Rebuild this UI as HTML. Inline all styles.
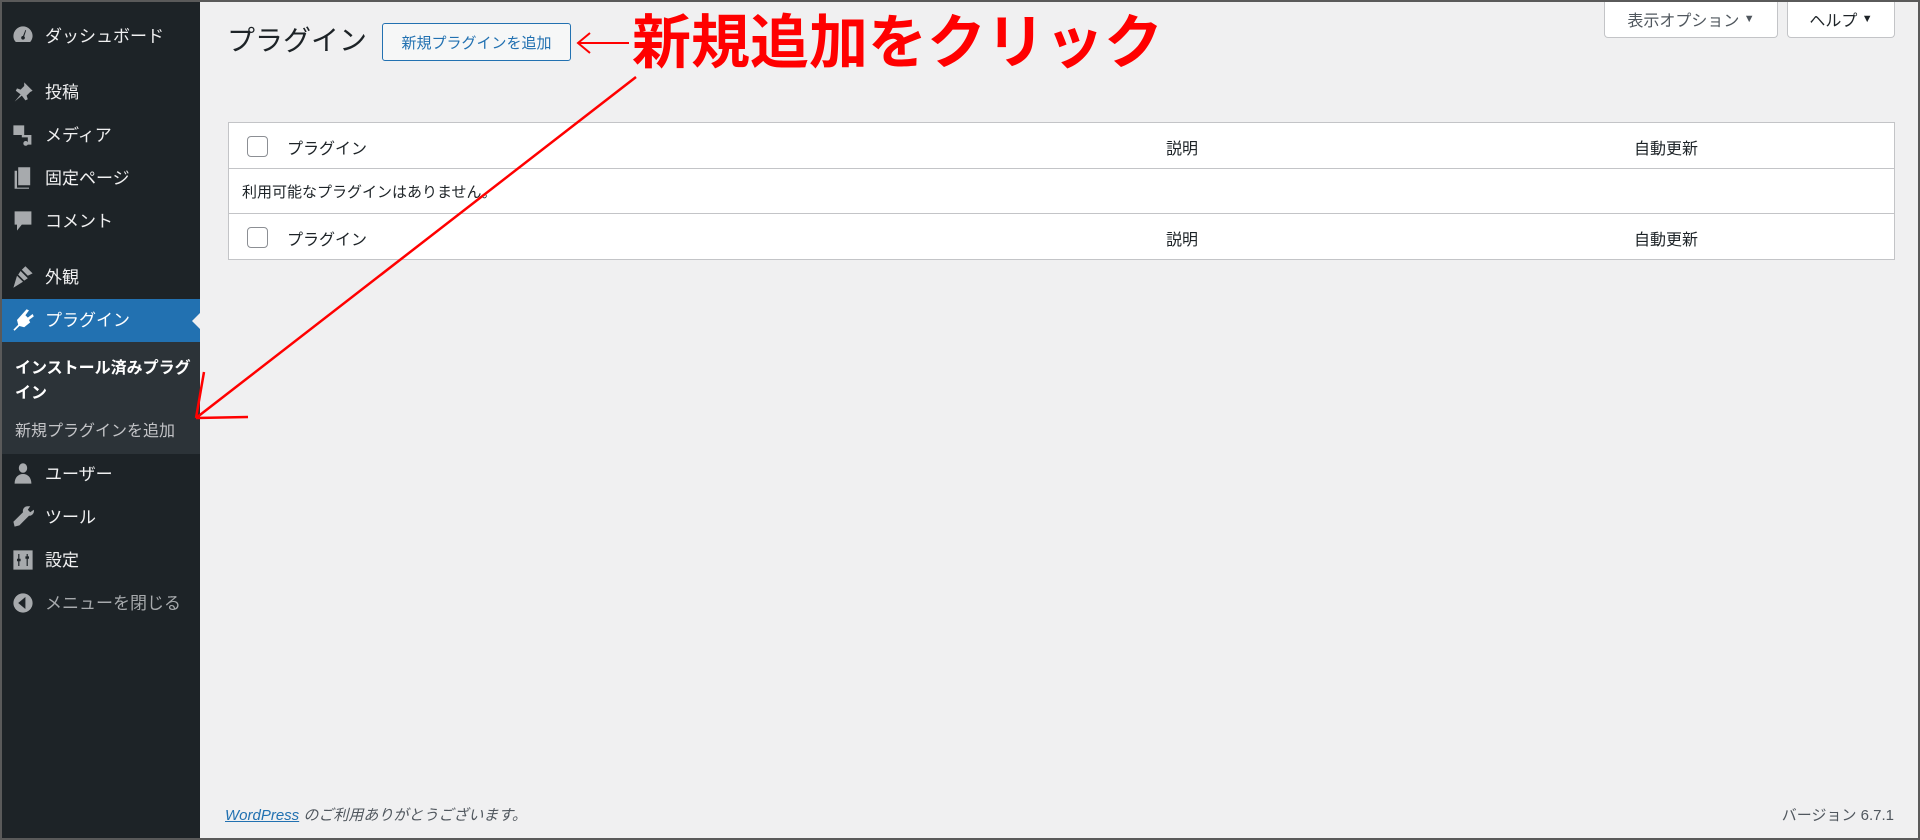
<!DOCTYPE html>
<html><head><meta charset="utf-8"><style>
*{box-sizing:border-box;margin:0;padding:0}
body{width:1920px;height:840px;overflow:hidden;background:#f0f0f1;font-family:"Liberation Sans","Noto Sans CJK JP",sans-serif;color:#1d2327;position:relative}
.frame{position:absolute;left:0;top:0;width:1920px;height:840px;border:2px solid #5a5a5a;pointer-events:none;z-index:10}
#side{position:absolute;left:0;top:0;width:200px;height:840px;background:#1d2327}
.mi{position:absolute;left:0;width:200px;color:#f0f0f1;font-size:17px;line-height:20px}
.mi .t{position:absolute;left:45px}
.mi svg{position:absolute;left:11px;top:-3px}
.act{position:absolute;left:0;top:299px;width:200px;height:43px;background:#2271b1}
.sub{position:absolute;left:0;top:342px;width:200px;height:112px;background:#2c3338}
.abs{position:absolute}
.btn{position:absolute;border:1px solid #2271b1;border-radius:3px;background:#f6f7f7;color:#2271b1;font-size:15px;display:flex;align-items:center;justify-content:center}
.tb{position:absolute;background:#fff;border:1px solid #c3c4c7;border-top:none;border-radius:0 0 4px 4px;color:#50575e;font-size:16px;display:flex;align-items:center;justify-content:center}
.row{position:absolute;left:228px;width:1667px;background:#fff;border:1px solid #c3c4c7;font-size:16px}
.cb{position:absolute;left:18px;width:21px;height:21px;border:1px solid #8c8f94;border-radius:4px;background:#fff}
</style></head><body>
<div id="side">
 <div class="mi" style="top:27px"><svg width="24" height="24" viewBox="0 0 20 20"><path fill="#a7aaad" d="M10 2a8 8 0 0 0-8 8c0 2 .7 3.7 2 5h12a8 8 0 0 0 2-5 8 8 0 0 0-8-8zm0 11a1.5 1.5 0 1 1 0-3l2-5 .6.3-1.6 5A1.5 1.5 0 0 1 10 13z"/></svg><span class="t">ダッシュボード</span></div>
 <div class="mi" style="top:83px"><svg width="24" height="24" viewBox="0 0 20 20"><path fill="#a7aaad" d="M11 2l7 7-2 1-3 3 1 3-2 1-3-4-6 5 5-6-4-3 1-2 3 1 3-3z"/></svg><span class="t">投稿</span></div>
 <div class="mi" style="top:126px"><svg width="24" height="24" viewBox="0 0 20 20"><path fill="#a7aaad" d="M2 2h9v8H2zM9 10h8v8h-3a2 2 0 1 1 0-2V12H9z"/></svg><span class="t">メディア</span></div>
 <div class="mi" style="top:169px"><svg width="24" height="24" viewBox="0 0 20 20"><path fill="#a7aaad" d="M6 1h10v15H6zM3 4h2v14h10v1H3z"/></svg><span class="t">固定ページ</span></div>
 <div class="mi" style="top:212px"><svg width="24" height="24" viewBox="0 0 20 20"><path fill="#a7aaad" d="M3 2h14v11h-8l-4 5v-5H3z"/></svg><span class="t">コメント</span></div>
 <div class="mi" style="top:268px"><svg width="24" height="24" viewBox="0 0 20 20"><path fill="#a7aaad" d="M12 1l6 6-4 2-5-5zM8 5l6 6-3 2-5-5zM5 9l5 5-8 5z"/></svg><span class="t">外観</span></div>
 <div class="act"></div>
 <div style="position:absolute;left:192px;top:313px;width:0;height:0;border-top:8px solid transparent;border-bottom:8px solid transparent;border-right:8px solid #f0f0f1"></div>
 <div class="mi" style="top:311px;color:#fff"><svg width="24" height="24" viewBox="0 0 20 20"><path fill="#fff" d="M13 1l2 1-3 4 2 2 4-3 1 2-4 3 1 2-5 4-4-1-4 4-1-1 4-4-1-4z"/></svg><span class="t">プラグイン</span></div>
 <div class="sub"></div>
 <div class="abs" style="left:15px;top:356px;font-size:16px;line-height:25px;font-weight:bold;color:#fff;width:180px">インストール済みプラグイン</div>
 <div class="abs" style="left:15px;top:417px;font-size:16px;color:#c3c4c7">新規プラグインを追加</div>
 <div class="mi" style="top:465px"><svg width="24" height="24" viewBox="0 0 20 20"><path fill="#a7aaad" d="M10 1a3.5 4 0 1 1 0 8 3.5 4 0 0 1 0-8zM3 18c0-5 3-8 7-8s7 3 7 8z"/></svg><span class="t">ユーザー</span></div>
 <div class="mi" style="top:508px"><svg width="24" height="24" viewBox="0 0 20 20"><path fill="#a7aaad" d="M14 1a4 4 0 0 0-4 5L2 14l1 4 4-1 8-8a4 4 0 0 0 4-5l-3 2-2-2 2-3z"/></svg><span class="t">ツール</span></div>
 <div class="mi" style="top:551px"><svg width="24" height="24" viewBox="0 0 20 20"><path fill="#a7aaad" d="M2 2h16v16H2zm4 3v4H5v2h1v4h1v-4h1V9H7V5zm7 0v2h-1v2h1v6h1V9h1V7h-1V5z"/></svg><span class="t">設定</span></div>
 <div class="mi" style="top:594px;color:#a7aaad"><svg width="24" height="24" viewBox="0 0 20 20"><circle cx="10" cy="10" r="8" fill="#a7aaad"/><path fill="#1d2327" d="M12 5v10l-6-5z"/></svg><span class="t">メニューを閉じる</span></div>
</div>

<div class="abs" style="left:227px;top:22px;font-size:28px;line-height:38px;color:#1d2327">プラグイン</div>
<div class="btn" style="left:382px;top:23px;width:189px;height:38px">新規プラグインを追加</div>
<div class="abs" style="left:632px;top:8px;font-size:59px;line-height:70px;font-weight:bold;color:#f00;white-space:nowrap">新規追加をクリック</div>

<div class="tb" style="left:1604px;top:0;width:174px;height:38px">表示オプション&nbsp;<span style="font-size:11px">▼</span></div>
<div class="tb" style="left:1787px;top:0;width:108px;height:38px;color:#1d2327">ヘルプ&nbsp;<span style="font-size:11px">▼</span></div>

<div class="row" style="top:122px;height:47px"><div class="cb" style="top:13px"></div><span class="abs" style="left:58px;top:12px">プラグイン</span><span class="abs" style="left:937px;top:12px">説明</span><span class="abs" style="left:1405px;top:12px">自動更新</span></div>
<div class="row" style="top:168px;height:46px;border-top:1px solid #c3c4c7"><span class="abs" style="left:13px;top:12px;font-size:15px">利用可能なプラグインはありません。</span></div>
<div class="row" style="top:213px;height:47px"><div class="cb" style="top:13px"></div><span class="abs" style="left:58px;top:12px">プラグイン</span><span class="abs" style="left:937px;top:12px">説明</span><span class="abs" style="left:1405px;top:12px">自動更新</span></div>

<div class="abs" style="left:225px;top:804px;font-size:15px;font-style:italic;color:#50575e"><span style="color:#2271b1;text-decoration:underline">WordPress</span> のご利用ありがとうございます。</div>
<div class="abs" style="right:26px;top:804px;font-size:15px;color:#50575e">バージョン 6.7.1</div>

<svg class="abs" style="left:0;top:0;z-index:5" width="1920" height="840"><g stroke="#f00" stroke-width="2.5" fill="none"><line x1="636" y1="77" x2="196" y2="418"/><line x1="196" y1="418" x2="204" y2="372"/><line x1="196" y1="418" x2="248" y2="417"/><line x1="578" y1="43" x2="629" y2="43" stroke-width="2"/><polyline points="590,33 578,43 590,53" stroke-width="2"/></g></svg>
<div class="frame"></div>
</body></html>
